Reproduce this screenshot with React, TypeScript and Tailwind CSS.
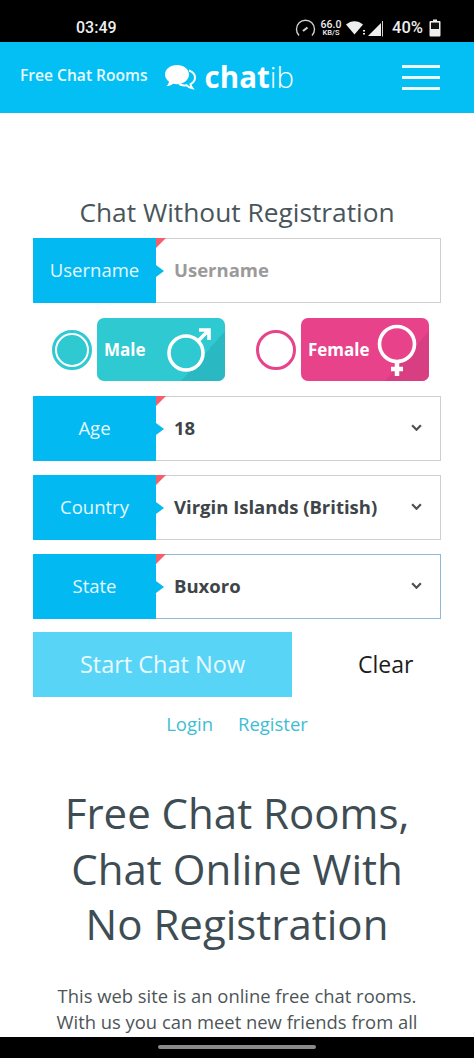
const openSans = { fontFamily: "'Open Sans', sans-serif" };

function Field({ label, value, focused, placeholder }: { label: string; value: string; focused?: boolean; placeholder?: boolean }) {
  return (
    <div className="flex h-[65px]">
      <div className="relative flex w-[123px] shrink-0 items-center justify-center bg-[#03b9f1] pb-[2px] text-[18.500px] text-[#e4f8ff]">
        {label}
        {/* red corner tag */}
        <div className="absolute left-full top-0 z-10 h-0 w-0 border-r-[10px] border-t-[10px] border-r-transparent border-t-[#f4606a]" />
        {/* pointer */}
        <div className="absolute left-full top-1/2 z-10 h-0 w-0 -translate-y-1/2 border-b-[6px] border-l-[8px] border-t-[6px] border-b-transparent border-l-[#03b9f1] border-t-transparent" />
      </div>
      <div
        className={`flex flex-1 items-center justify-between border border-l-0 pb-[2px] pl-[18px] pr-[18px] text-[18.500px] font-bold ${
          focused ? "border-[#8fb9d6]" : "border-[#cfcfcf]"
        } ${placeholder ? "text-[#9a9a9a]" : "text-[#3d4548]"}`}
      >
        <span>{value}</span>
        {!placeholder && (
          <svg width="11" height="7" viewBox="0 0 12 8" fill="none" stroke="#4a5256" strokeWidth="2.6">
            <path d="M1 1.500l5 5 5-5" />
          </svg>
        )}
      </div>
    </div>
  );
}

function GenderOption({ label, color, dark, selected, children }: { label: string; color: string; dark: string; selected?: boolean; children: React.ReactNode }) {
  return (
    <div className="flex items-center gap-[5px]">
      <div className="flex h-[40px] w-[40px] items-center justify-center rounded-full border-[3px] bg-white" style={{ borderColor: color }}>
        {selected && <div className="h-[30px] w-[30px] rounded-full" style={{ background: color }} />}
      </div>
      <div className="relative flex h-[63px] w-[128px] items-center overflow-hidden rounded-[7px] pl-[7px] text-[17px] font-bold text-white" style={{ background: color }}>
        <div className="absolute bottom-0 right-0 h-[50px] w-[44px]" style={{ background: `linear-gradient(to bottom right, transparent 50%, ${dark} 50%)` }} />
        <span className="relative">{label}</span>
        {children}
      </div>
    </div>
  );
}

export default function App() {
  return (
    <div className="flex h-[1058px] w-[474px] flex-col overflow-hidden bg-white" style={openSans}>
      {/* android status bar */}
      <div className="flex h-[42px] shrink-0 items-center justify-between bg-black pl-[76px] pr-[33px] pt-[14px] text-[#eeeeee]" style={{ fontFamily: "Roboto, sans-serif" }}>
        <span className="text-[16px] font-medium">03:49</span>
        <div className="flex items-center">
          <svg width="21" height="19" viewBox="0 0 21 19" fill="none" stroke="#cfcfcf" strokeWidth="1.400" className="mr-[4px]">
            <path d="M4 16.500a9 9 0 1 1 13 0" />
            <path d="M8 12l4.500-3.500" strokeWidth="2.200" />
          </svg>
          <div className="mr-[4px] flex w-[22px] flex-col items-center text-[10.500px] font-medium">
            <span className="h-[9px] leading-[9px]">66.0</span>
            <span className="h-[8px] text-[7.500px] leading-[8px]">KB/S</span>
          </div>
          <svg width="20" height="14" viewBox="0 0 20 14" fill="#eeeeee" className="mr-[1px]">
            <path d="M0 3.500C5-1 12-1 17 3.500L8.500 13.500z" />
            <path d="M17 9h2v1.600h-2zM17 12h2v1.600h-2z" />
          </svg>
          <svg width="17" height="17" viewBox="0 0 17 17" className="mr-[8px]">
            <path d="M1 16L14 3v13z" fill="#eeeeee" />
            <path d="M15.500 1v15.500" stroke="#cfcfcf" strokeWidth="1" />
          </svg>
          <span className="mr-[6px] w-[31px] text-[16.500px] font-medium">40%</span>
          <svg width="12" height="18" viewBox="0 0 12 18">
            <path d="M4 .5h4V2h2.500a1 1 0 0 1 1 1v13.500a1 1 0 0 1-1 1h-9a1 1 0 0 1-1-1V3a1 1 0 0 1 1-1H4z" fill="#eeeeee" />
            <rect x="2" y="3.600" width="8" height="6.400" fill="#111111" />
          </svg>
        </div>
      </div>

      {/* site header */}
      <header className="flex h-[71px] shrink-0 items-center bg-[#03bff3] pl-[20px] pr-[34px]">
        <span className="mb-[4px] text-[15.600px] font-semibold text-[#e6f9ff]">Free Chat Rooms</span>
        <svg width="33" height="28" viewBox="0 0 33 28" className="ml-[16px] mt-[1px]">
          <path d="M13 1C6.500 1 1 5 1 10.500c0 3 1.600 5.500 4 7.200-.3 1.800-1.200 3.300-2.700 4.300 2.800 0 5-.8 6.700-2.300 1.200.3 2.600.5 4 .5 6.500 0 12-4.200 12-9.700S19.500 1 13 1z" fill="#ffffff" />
          <path d="M25 6.500c3.500 1.300 6 3.800 6 7 0 3-1.800 5.200-4.500 6.700.2 1.500.8 2.800 1.800 4-2.500-.4-4.500-1.500-5.800-3-2.500.4-5.500 0-7.500-1" fill="none" stroke="#ffffff" strokeWidth="2" />
        </svg>
        <span className="ml-[8px] mb-[2px] text-[29.500px] leading-none text-white">
          <span className="font-bold">chat</span>
          <span className="font-light">ib</span>
        </span>
        <div className="ml-auto mb-[1px] flex w-[38px] flex-col gap-[8px]">
          <div className="h-[3px] bg-[#eafaff]" />
          <div className="h-[3px] bg-[#eafaff]" />
          <div className="h-[3px] bg-[#eafaff]" />
        </div>
      </header>

      <main className="flex-1 overflow-hidden">
        <div className="px-[33px] pt-[81px]">
          <h2 className="h-[44px] text-center text-[26.300px] leading-[36px] text-[#48555b]">Chat Without Registration</h2>

          <Field label="Username" value="Username" placeholder />

          <div className="flex h-[93px] items-center pl-[19px]">
            <GenderOption label="Male" color="#2fc9d1" dark="#2ab8c2" selected>
              <svg width="46" height="46" viewBox="0 0 46 46" fill="none" stroke="#ffffff" strokeWidth="3.600" className="absolute right-[12px] top-[8px]">
                <circle cx="19" cy="27" r="17" />
                <path d="M31 15l9-9M32 4h10v10" />
              </svg>
            </GenderOption>
            <div className="ml-[31px]">
              <GenderOption label="Female" color="#e8438a" dark="#d83f83">
                <svg width="40" height="56" viewBox="0 0 40 56" fill="none" stroke="#ffffff" strokeWidth="3.600" className="absolute right-[12px] top-[6px]">
                  <circle cx="20" cy="20" r="17.500" />
                  <path d="M20 37.500V52M14 45h12" strokeWidth="4.500" />
                </svg>
              </GenderOption>
            </div>
          </div>

          <div className="flex flex-col gap-[14px]">
            <Field label="Age" value="18" />
            <Field label="Country" value="Virgin Islands (British)" />
            <Field label="State" value="Buxoro" focused />
          </div>

          <div className="mt-[13px] flex h-[65px] items-center">
            <div className="flex h-full w-[259px] items-center justify-center bg-[#58d4f7] text-[23.500px] text-[#e9faff]">Start Chat Now</div>
            <span className="ml-[66px] text-[23px] text-[#1c1c1c]">Clear</span>
          </div>

          <div className="mt-[13px] flex justify-center gap-[25px] text-[18.500px] leading-[28px] text-[#3fbdd3]">
            <span>Login</span>
            <span>Register</span>
          </div>
        </div>

        <h1 className="mx-auto mt-[47px] w-[420px] text-center text-[42px] leading-[55.500px] text-[#3e4c53]">
          Free Chat Rooms,
          <br />
          Chat Online With
          <br />
          No Registration
        </h1>
        <p className="mt-[31px] text-center text-[18.400px] leading-[26px] text-[#4d5557]">
          This web site is an online free chat rooms.
          <br />
          With us you can meet new friends from all
        </p>
      </main>

      {/* gesture bar */}
      <div className="flex h-[21px] shrink-0 items-start justify-center bg-black pt-[8px]">
        <div className="h-[4px] w-[158px] rounded-full bg-[#8a8a8a]" />
      </div>
    </div>
  );
}
